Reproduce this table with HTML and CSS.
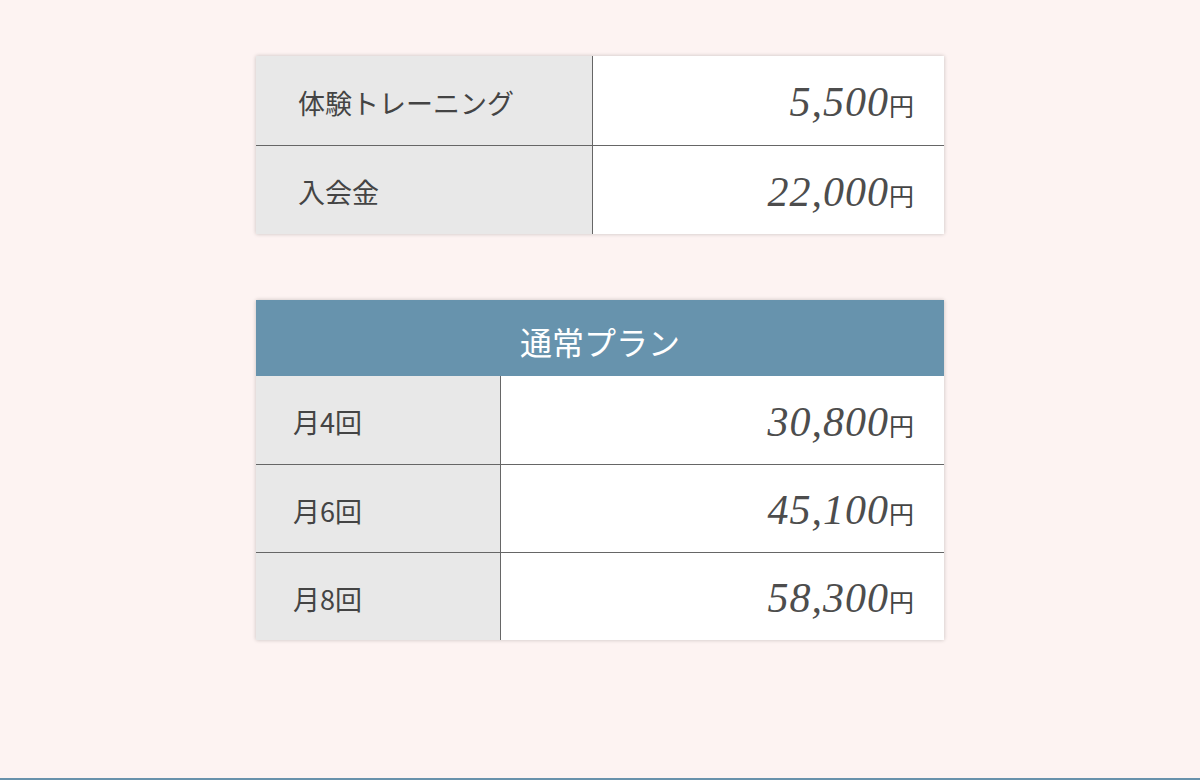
FILE: index.html
```html
<!DOCTYPE html>
<html lang="ja">
<head>
<meta charset="utf-8">
<title>料金</title>
<link rel="stylesheet" href="styles.css">
</head>
<body>
<div class="page">
  <table class="price price-first">
    <tr>
      <th class="label">体験トレーニング</th>
      <td class="value"><span class="num">5,500</span><span class="yen">円</span></td>
    </tr>
    <tr>
      <th class="label">入会金</th>
      <td class="value"><span class="num">22,000</span><span class="yen">円</span></td>
    </tr>
  </table>

  <table class="price price-plan">
    <tr>
      <th class="head" colspan="2">通常プラン</th>
    </tr>
    <tr>
      <th class="label">月4回</th>
      <td class="value"><span class="num">30,800</span><span class="yen">円</span></td>
    </tr>
    <tr>
      <th class="label">月6回</th>
      <td class="value"><span class="num">45,100</span><span class="yen">円</span></td>
    </tr>
    <tr>
      <th class="label">月8回</th>
      <td class="value"><span class="num">58,300</span><span class="yen">円</span></td>
    </tr>
  </table>
</div>
</body>
</html>
```
FILE: styles.css
```css
html, body {
  margin: 0;
  padding: 0;
  background: #fdf3f2;
}
.page {
  box-sizing: border-box;
  min-height: 780px;
  border-bottom: 2px solid #6891ab;
  display: flex;
  flex-direction: column;
  align-items: center;
  gap: 66px;
  padding-top: 56px;
  font-family: "Liberation Serif", "Noto Sans CJK JP", serif;
  color: #444;
}
.price {
  width: 688px;
  border-collapse: collapse;
  box-shadow: 0 0 4px rgba(0, 0, 0, 0.22);
  background: #fff;
}
.price-plan tr:nth-child(n+3) th,
.price-plan tr:nth-child(n+3) td,
.price-first tr:nth-child(2) th,
.price-first tr:nth-child(2) td {
  border-top: 1px solid #666;
}
.label {
  background: #e8e8e8;
  text-align: left;
  font-weight: normal;
  font-size: 27px;
  font-family: "Noto Sans CJK JP", sans-serif;
  color: #444;
  border-right: 1px solid #666;
  vertical-align: middle;
  box-sizing: border-box;
}
.price-first .label {
  width: 336px;
  height: 89px;
  padding: 4px 0 0 42px;
}
.price-plan .label {
  width: 244px;
  height: 88px;
  padding: 4px 0 0 37px;
}
.value {
  text-align: right;
  padding: 4px 30px 0 0;
  vertical-align: middle;
  white-space: nowrap;
}
.num {
  font-family: "Liberation Serif", serif;
  font-style: italic;
  font-size: 42px;
  letter-spacing: 1px;
  color: #4d4d4d;
}
.yen {
  font-family: "Noto Sans CJK JP", sans-serif;
  font-size: 25px;
  color: #444;
}
.head {
  background: #6793ad;
  color: #fff;
  font-weight: normal;
  font-family: "Noto Sans CJK JP", sans-serif;
  font-size: 32px;
  height: 76px;
  padding: 6px 0 0;
  box-sizing: border-box;
  text-align: center;
  vertical-align: middle;
}
```
